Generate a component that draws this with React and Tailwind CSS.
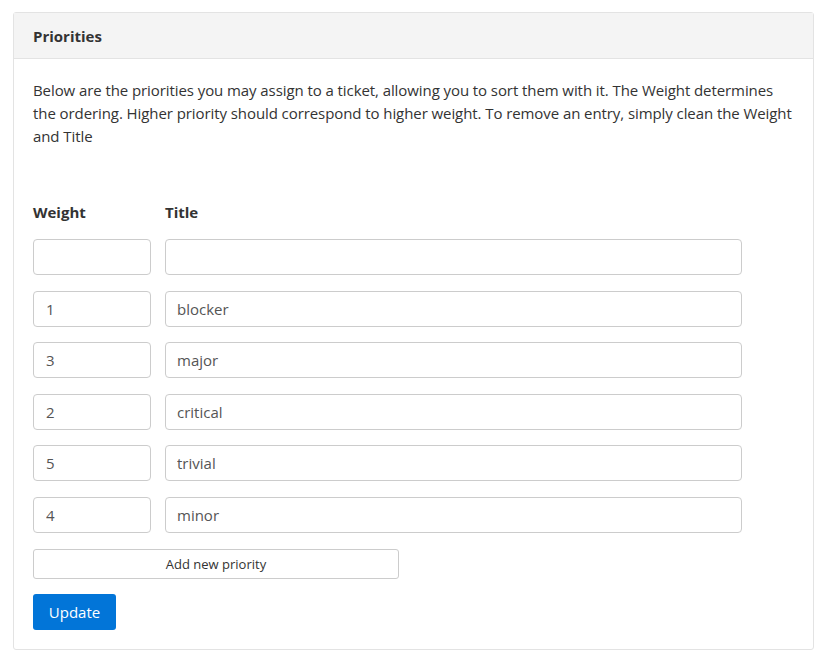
import React from "react";

const rows = [
  { w: "", t: "" },
  { w: "1", t: "blocker" },
  { w: "3", t: "major" },
  { w: "2", t: "critical" },
  { w: "5", t: "trivial" },
  { w: "4", t: "minor" },
];

export default function App() {
  return (
    <div className="bg-white min-h-[660px] pt-[12px] pl-[13px]" style={{ fontFamily: '"Open Sans", sans-serif' }}>
      <div className="w-[801px] border border-[#e3e3e3] rounded-[3px] text-[#333]">
        <div className="h-[46px] bg-[#f4f4f4] border-b border-[#e3e3e3] px-[19px] pt-[1px] flex items-center">
          <span className="text-[15px] font-bold text-[#333]">Priorities</span>
        </div>
        <div className="pl-[19px] pr-[16px] pt-[20px] pb-[19px]">
          <p className="text-[15px] leading-[23px] text-[#333] tracking-[-0.08px]">
            Below are the priorities you may assign to a ticket, allowing you to sort them with it. The Weight determines the ordering. Higher priority should correspond to higher weight. To remove an entry, simply clean the Weight and Title
          </p>
          <div className="mt-[54px] flex gap-[14px] text-[15px] leading-[20px] font-bold">
            <div className="w-[118px]">Weight</div>
            <div>Title</div>
          </div>
          <div className="mt-[17px] flex flex-col gap-[15.6px]">
            {rows.map((r, i) => (
              <div key={i} className="flex gap-[14px]">
                <input
                  readOnly
                  value={r.w}
                  className="w-[118px] h-[36px] border border-[#ccc] rounded-[4px] px-[12px] text-[15px] text-[#555] outline-none"
                />
                <input
                  readOnly
                  value={r.t}
                  className="w-[577px] h-[36px] border border-[#ccc] rounded-[4px] px-[11px] text-[15px] text-[#555] outline-none"
                />
              </div>
            ))}
          </div>
          <button className="mt-[16px] w-[366px] h-[30px] border border-[#ccc] rounded-[3px] bg-white pt-[2px] text-[13px] text-[#333] flex items-center justify-center">
            Add new priority
          </button>
          <button className="mt-[15px] w-[83px] h-[36px] rounded-[3px] bg-[#0275d8] text-white text-[15px] flex items-center justify-center">
            Update
          </button>
        </div>
      </div>
    </div>
  );
}
